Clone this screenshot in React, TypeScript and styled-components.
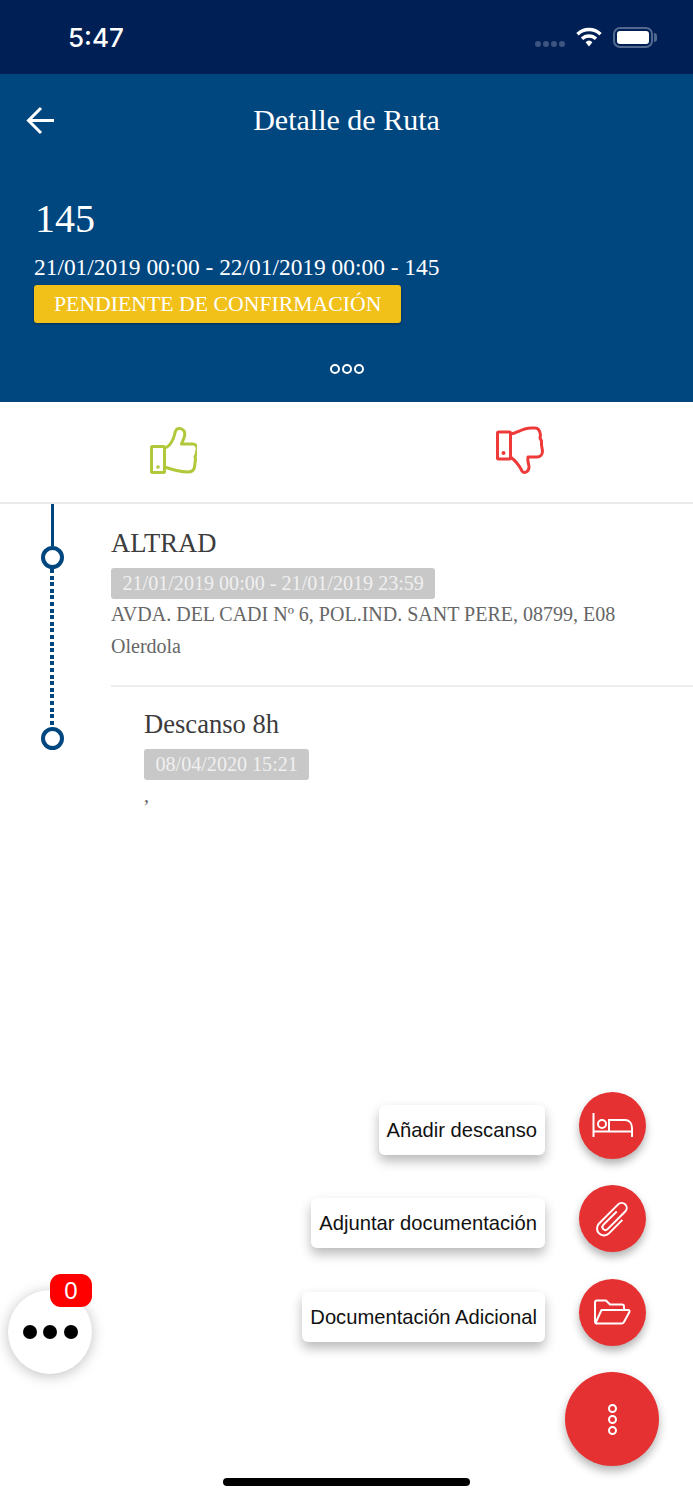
import React from 'react'
import styled, { createGlobalStyle } from 'styled-components'

const GlobalStyle = createGlobalStyle`
  html, body {
    margin: 0;
    padding: 0;
    background: #fff;
  }
  * {
    box-sizing: border-box;
  }
`

const Screen = styled.div`
  position: relative;
  width: 693px;
  height: 1500px;
  overflow: hidden;
  background: #fff;
  font-family: 'Liberation Serif', 'Times New Roman', serif;
`

const StatusBar = styled.div`
  height: 74px;
  background: #002055;
  display: flex;
  align-items: center;
  justify-content: space-between;
  padding: 0 40px 0 68px;
`

const Clock = styled.span`
  font-family: Inter, 'Liberation Sans', sans-serif;
  font-weight: 500;
  font-size: 26px;
  color: #fff;
`

const StatusIcons = styled.div`
  display: flex;
  align-items: center;
`

const SignalDots = styled.div`
  display: flex;
  gap: 2px;
  margin: 14px 11px 0 0;
`

const SignalDot = styled.span`
  width: 6px;
  height: 6px;
  border-radius: 50%;
  background: #3c5580;
`

const Battery = styled.div`
  position: relative;
  width: 40px;
  height: 21px;
  margin-left: 11px;
  padding: 2px;
  border: 2px solid #52688f;
  border-radius: 7px;

  &::after {
    content: '';
    position: absolute;
    right: -6px;
    top: 4px;
    width: 3px;
    height: 9px;
    border-radius: 0 3px 3px 0;
    background: #52688f;
  }
`

const BatteryFill = styled.div`
  width: 100%;
  height: 100%;
  border-radius: 3px;
  background: #fff;
`

const Hero = styled.header`
  background: #00467f;
  color: #fff;
  height: 328px;
`

const NavBar = styled.div`
  height: 92px;
  display: flex;
  align-items: center;
  justify-content: center;
  position: relative;
`

const BackButton = styled.div`
  position: absolute;
  left: 26px;
  top: 32px;
  display: flex;
`

const Title = styled.h1`
  margin: 0;
  font-size: 30px;
  font-weight: 400;
`

const Summary = styled.div`
  padding: 29px 34px 0;
`

const RouteNumber = styled.div`
  font-size: 40px;
  line-height: 48px;
  padding-left: 1px;
`

const RouteDates = styled.div`
  margin-top: 9px;
  font-size: 23.4px;
  line-height: 30px;
`

const StatusBadge = styled.div`
  display: inline-block;
  margin-top: 3px;
  height: 38px;
  padding: 0 20px;
  background: #f1c019;
  border-radius: 3px;
  box-shadow: 0 1px 3px rgba(0, 0, 0, 0.35);
  font-size: 21.75px;
  line-height: 38px;
  white-space: nowrap;
`

const MoreRow = styled.div`
  display: flex;
  justify-content: center;
  gap: 2px;
  margin-top: 41px;
`

const Ring = styled.span`
  width: 10px;
  height: 10px;
  border: 2.5px solid #fff;
  border-radius: 50%;
`

const Actions = styled.div`
  display: flex;
  height: 102px;
  padding-bottom: 3px;
  border-bottom: 2px solid #eaeaea;
`

const ActionCell = styled.div`
  flex: 1;
  display: flex;
  align-items: center;
  justify-content: center;
`

const Timeline = styled.section`
  display: flex;
`

const Rail = styled.div`
  width: 24px;
  margin: 0 47px 0 40px;
  display: flex;
  flex-direction: column;
  align-items: center;
`

const RailLine = styled.div`
  width: 3px;
  height: 42px;
  background: #00467f;
`

const RailDots = styled.div`
  width: 3.5px;
  height: 158px;
  background: repeating-linear-gradient(to bottom, #00467f 0 4px, transparent 4px 6.6px);
`

const RailStop = styled.div`
  flex: none;
  width: 23px;
  height: 23px;
  border: 4px solid #00467f;
  border-radius: 50%;
`

const Stops = styled.div`
  flex: 1;
  min-width: 0;
`

const Stop = styled.article<{ $inset?: boolean }>`
  padding: ${p => (p.$inset ? '20px 0 0 33px' : '22px 0 23px')};
  border-bottom: ${p => (p.$inset ? 'none' : '2px solid #eee')};
`

const StopName = styled.div`
  font-size: 26.6px;
  line-height: 34px;
  color: #3c3c3c;
`

const StopDate = styled.div`
  display: table;
  margin: 8px 0 -1px;
  height: 31px;
  padding: 0 11.5px;
  background: #c8c8c8;
  border-radius: 3px;
  color: #f0f0f0;
  font-size: 20.1px;
  line-height: 31px;
  white-space: nowrap;
`

const StopLine = styled.div`
  font-size: 20px;
  line-height: 32px;
  color: #666;
  white-space: nowrap;
`

const FabStack = styled.div`
  position: absolute;
  right: 34px;
  bottom: 34px;
  display: flex;
  flex-direction: column;
  align-items: flex-end;
  gap: 26.5px;
`

const FabRow = styled.div`
  display: flex;
  align-items: center;
  gap: 34px;
  margin-right: 13px;
`

const FabLabel = styled.div`
  height: 50px;
  margin-top: 9px;
  padding: 0 8px;
  background: #fff;
  border-radius: 6px;
  box-shadow: 0 6px 12px rgba(0, 0, 0, 0.28);
  font-family: 'Liberation Sans', Arial, sans-serif;
  font-size: 20.2px;
  line-height: 50px;
  color: #111;
  white-space: nowrap;
`

const SmallFab = styled.div`
  width: 67px;
  height: 67px;
  border-radius: 50%;
  background: #e53131;
  box-shadow: 0 5px 9px rgba(0, 0, 0, 0.3);
  display: flex;
`

const MainFab = styled.div`
  width: 94px;
  height: 94px;
  border-radius: 50%;
  background: #e53131;
  box-shadow: 0 5px 10px rgba(0, 0, 0, 0.3);
  display: flex;
  flex-direction: column;
  align-items: center;
  justify-content: center;
  gap: 2px;
`

const FabRing = styled.span`
  width: 9px;
  height: 9px;
  border: 2px solid #fff;
  border-radius: 50%;
`

const ChatBubble = styled.div`
  position: absolute;
  left: 8px;
  top: 1290px;
  width: 84px;
  height: 84px;
  border-radius: 50%;
  background: #fff;
  box-shadow: 0 2px 14px rgba(0, 0, 0, 0.25);
  display: flex;
  align-items: center;
  justify-content: center;
  gap: 6.5px;
`

const ChatDot = styled.span`
  width: 14px;
  height: 14px;
  border-radius: 50%;
  background: #000;
`

const ChatBadge = styled.div`
  position: absolute;
  left: 42px;
  top: -16px;
  width: 42px;
  height: 33px;
  border-radius: 11px;
  background: #f00;
  color: #fff;
  font-family: 'Liberation Sans', Arial, sans-serif;
  font-size: 24px;
  line-height: 33px;
  text-align: center;
`

const HomeIndicator = styled.div`
  position: absolute;
  left: 223px;
  bottom: 14px;
  width: 247px;
  height: 8px;
  border-radius: 4px;
  background: #000;
`

const WifiIcon = () => (
  <svg width="26" height="20" viewBox="0 0 26 20" fill="none" stroke="#fff" strokeWidth="3.4">
    <path d="M1.5 7.2A16.5 16.5 0 0 1 24.5 7.2" />
    <path d="M6 11.8A10 10 0 0 1 20 11.8" />
    <path d="M9.6 15.2 13 19.5l3.4-4.3A5 5 0 0 0 9.6 15.2Z" fill="#fff" stroke="none" />
  </svg>
)

const BackIcon = () => (
  <svg width="29" height="29" viewBox="0 0 29 29" fill="none" stroke="#fff" strokeWidth="3">
    <path d="M28 14.5H3" />
    <path d="M15 2 2.5 14.5 15 27" />
  </svg>
)

const ThumbUp = () => (
  <svg width="48" height="50" viewBox="29.5 15 48 50" fill="none" stroke="#b1c83a" strokeWidth="3" strokeLinejoin="round">
    <rect x="32" y="35.5" width="13" height="26" rx="1" />
    <circle cx="38.5" cy="56" r="1.8" fill="#b1c83a" stroke="none" />
    <path d="M45 37C50 36 52 32 54 27 56 22 55 18 59 17.5 64 17 66 21 65 25 64.500 28 62.500 31 62 33L73 33C77 33 78 36 77.500 39L76.500 44 75.500 46 76 48 75 56C74.500 60 71 61 68 61 60 61 54 59 45 56" />
  </svg>
)

const ThumbDown = () => (
  <svg width="50" height="50" viewBox="26 15 50 50" fill="none" stroke="#ef3a3a" strokeWidth="3" strokeLinejoin="round">
    <rect x="28.500" y="21" width="13" height="27" rx="1" />
    <circle cx="34.500" cy="42" r="2" fill="#ef3a3a" stroke="none" />
    <path d="M41.500 23C48 22 54 17 62 17L66 17C70 17 71 20 71.500 24L71 27 72.500 30 72.500 34 73.500 40C73.500 44 71 46 68 46L59 46C58 50 60 53 60 56 60 61 55 63 53 60 51 56 47 50 41.500 46" />
  </svg>
)

const BedIcon = () => (
  <svg width="67" height="67" viewBox="0 0 67 67" fill="none" stroke="#fff" strokeWidth="2">
    <path d="M14.500 21V45" />
    <path d="M14.500 39.500H53" />
    <circle cx="23" cy="32" r="4" />
    <path d="M30 39.500V28H46C50 28 53 31 53 36V45" />
  </svg>
)

const ClipIcon = () => (
  <svg width="67" height="67" viewBox="0 0 67 67" fill="none" stroke="#fff" strokeWidth="2">
    <g transform="translate(33.500 33.500) rotate(45)">
      <path d="M-2-8V11A3 3 0 0 0 4 11V-14A5 5 0 0 0-6-14V13A7 7 0 0 0 8 13V-6" />
    </g>
  </svg>
)

const FolderIcon = () => (
  <svg width="67" height="67" viewBox="0 0 67 67" fill="none" stroke="#fff" strokeWidth="2" strokeLinejoin="round">
    <path d="M18 44.500C17 44.500 16 43.500 16 42.500V23.500C16 22.300 17 21.500 18 21.500H27L31 25.500H43C44.100 25.500 45 26.400 45 27.500V31" />
    <path d="M22.500 31H49C50.200 31 50.900 32 50.400 33L45 43C44.500 44 43.500 44.500 42.500 44.500H18C17 44.500 16.500 43.800 17 43L22.500 31Z" />
  </svg>
)

const fabActions = [
  { label: 'Añadir descanso', icon: <BedIcon /> },
  { label: 'Adjuntar documentación', icon: <ClipIcon /> },
  { label: 'Documentación Adicional', icon: <FolderIcon /> },
]

const App = () => {
  return (
    <Screen>
      <GlobalStyle />
      <StatusBar>
        <Clock>5:47</Clock>
        <StatusIcons>
          <SignalDots>
            <SignalDot />
            <SignalDot />
            <SignalDot />
            <SignalDot />
          </SignalDots>
          <WifiIcon />
          <Battery>
            <BatteryFill />
          </Battery>
        </StatusIcons>
      </StatusBar>

      <Hero>
        <NavBar>
          <BackButton>
            <BackIcon />
          </BackButton>
          <Title>Detalle de Ruta</Title>
        </NavBar>
        <Summary>
          <RouteNumber>145</RouteNumber>
          <RouteDates>21/01/2019 00:00 - 22/01/2019 00:00 - 145</RouteDates>
          <StatusBadge>PENDIENTE DE CONFIRMACIÓN</StatusBadge>
        </Summary>
        <MoreRow>
          <Ring />
          <Ring />
          <Ring />
        </MoreRow>
      </Hero>

      <Actions>
        <ActionCell>
          <ThumbUp />
        </ActionCell>
        <ActionCell>
          <ThumbDown />
        </ActionCell>
      </Actions>

      <Timeline>
        <Rail>
          <RailLine />
          <RailStop />
          <RailDots />
          <RailStop />
        </Rail>
        <Stops>
          <Stop>
            <StopName>ALTRAD</StopName>
            <StopDate>21/01/2019 00:00 - 21/01/2019 23:59</StopDate>
            <StopLine>AVDA. DEL CADI Nº 6, POL.IND. SANT PERE, 08799, E08</StopLine>
            <StopLine>Olerdola</StopLine>
          </Stop>
          <Stop $inset>
            <StopName>Descanso 8h</StopName>
            <StopDate>08/04/2020 15:21</StopDate>
            <StopLine>,</StopLine>
          </Stop>
        </Stops>
      </Timeline>

      <ChatBubble>
        <ChatDot />
        <ChatDot />
        <ChatDot />
        <ChatBadge>0</ChatBadge>
      </ChatBubble>

      <FabStack>
        {fabActions.map(action => (
          <FabRow key={action.label}>
            <FabLabel>{action.label}</FabLabel>
            <SmallFab>{action.icon}</SmallFab>
          </FabRow>
        ))}
        <MainFab>
          <FabRing />
          <FabRing />
          <FabRing />
        </MainFab>
      </FabStack>

      <HomeIndicator />
    </Screen>
  )
}

export default App
